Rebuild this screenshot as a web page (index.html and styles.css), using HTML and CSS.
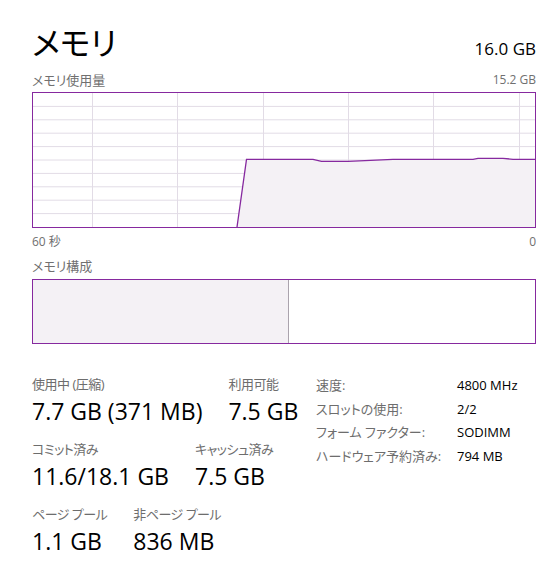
FILE: index.html
```html
<!DOCTYPE html>
<html lang="ja">

<head>
  <meta charset="UTF-8" />
  <title>メモリ</title>
  <link rel="stylesheet" href="styles.css">
</head>

<body>
  <div class="page">
    <div class="head">
      <h1>メモリ</h1>
      <span class="total">16.0 GB</span>
    </div>

    <div class="caption first">
      <span>メモリ使用量</span>
      <span class="num">15.2 GB</span>
    </div>
    <div class="graph">
      <svg viewBox="0 0 502 134" preserveAspectRatio="none">
        <g class="grid">
          <line x1="0" y1="13.4" x2="502" y2="13.4" />
          <line x1="0" y1="26.8" x2="502" y2="26.8" />
          <line x1="0" y1="40.2" x2="502" y2="40.2" />
          <line x1="0" y1="53.6" x2="502" y2="53.6" />
          <line x1="0" y1="67" x2="502" y2="67" />
          <line x1="0" y1="80.4" x2="502" y2="80.4" />
          <line x1="0" y1="93.8" x2="502" y2="93.8" />
          <line x1="0" y1="107.2" x2="502" y2="107.2" />
          <line x1="0" y1="120.6" x2="502" y2="120.6" />
          <line x1="59.5" y1="0" x2="59.5" y2="134" />
          <line x1="144.5" y1="0" x2="144.5" y2="134" />
          <line x1="230.5" y1="0" x2="230.5" y2="134" />
          <line x1="315.5" y1="0" x2="315.5" y2="134" />
          <line x1="400.5" y1="0" x2="400.5" y2="134" />
          <line x1="486.5" y1="0" x2="486.5" y2="134" />
        </g>
        <polygon class="area" points="204,134 213.5,66.3 280,66.3 288.5,68.3 315,68.3 360,66.3 440,66.3 445,65.3 470,65.3 480,66.3 502,66.3 502,134" />
        <polyline class="line" points="204,134 213.5,66.3 280,66.3 288.5,68.3 315,68.3 360,66.3 440,66.3 445,65.3 470,65.3 480,66.3 502,66.3" />
      </svg>
    </div>
    <div class="caption axis">
      <span class="num">60 秒</span>
      <span class="num">0</span>
    </div>

    <div class="caption">
      <span>メモリ構成</span>
    </div>
    <div class="compose">
      <div class="in-use"></div>
      <div class="free"></div>
    </div>

    <div class="stats">
      <div class="left">
        <div class="row">
          <div class="stat">
            <div class="label">使用中 (圧縮)</div>
            <div class="value">7.7 GB (371 MB)</div>
          </div>
          <div class="stat">
            <div class="label">利用可能</div>
            <div class="value">7.5 GB</div>
          </div>
        </div>
        <div class="row">
          <div class="stat">
            <div class="label">コミット済み</div>
            <div class="value">11.6/18.1 GB</div>
          </div>
          <div class="stat">
            <div class="label">キャッシュ済み</div>
            <div class="value">7.5 GB</div>
          </div>
        </div>
        <div class="row">
          <div class="stat">
            <div class="label">ページ プール</div>
            <div class="value">1.1 GB</div>
          </div>
          <div class="stat">
            <div class="label">非ページ プール</div>
            <div class="value">836 MB</div>
          </div>
        </div>
      </div>

      <dl class="specs">
        <dt>速度:</dt>
        <dd>4800 MHz</dd>
        <dt>スロットの使用:</dt>
        <dd>2/2</dd>
        <dt>フォーム ファクター:</dt>
        <dd>SODIMM</dd>
        <dt>ハードウェア予約済み:</dt>
        <dd>794 MB</dd>
      </dl>
    </div>
  </div>
</body>

</html>
```

FILE: styles.css
```css
* {
  box-sizing: border-box;
  margin: 0;
  padding: 0;
}

body {
  font-family: 'Open Sans', 'Noto Sans CJK JP', sans-serif;
  font-feature-settings: "palt";
  background: #fff;
  color: #000;
}

.page {
  padding: 22px 13px 0 32px;
}

.head {
  display: flex;
  justify-content: space-between;
  align-items: baseline;
}

.head h1 {
  font-size: 32px;
  font-weight: 400;
  line-height: 42px;
}

.total {
  font-size: 17px;
}

.caption {
  display: flex;
  justify-content: space-between;
  font-size: 13px;
  line-height: 18px;
  color: #707070;
  margin-top: 6px;
}

.caption.first {
  margin-top: 7px;
}

.caption.axis {
  margin-top: 5px;
}

.caption .num {
  font-size: 12px;
}

.graph {
  border: 1px solid #86299f;
  height: 136px;
  margin-top: 3px;
}

.graph svg {
  display: block;
  width: 100%;
  height: 100%;
}

.grid line {
  stroke: #e2dce6;
  stroke-width: 1;
}

.area {
  fill: #f4f1f5;
}

.line {
  fill: none;
  stroke: #86299f;
  stroke-width: 1.3;
}

.compose {
  display: flex;
  border: 1px solid #86299f;
  height: 65px;
  margin-top: 4px;
}

.compose .in-use {
  width: 256px;
  background: #f4f1f5;
  border-right: 1px solid #aaa3ad;
}

.compose .free {
  flex: 1;
}

.stats {
  display: flex;
  margin-top: 30px;
}

.left {
  width: 284px;
  display: flex;
  flex-direction: column;
  gap: 11px;
}

.row {
  display: flex;
  gap: 26px;
}

.label {
  font-size: 13px;
  line-height: 20px;
  letter-spacing: -0.5px;
  color: #6d6d6d;
}

.value {
  font-size: 23px;
  line-height: 34px;
}

.specs {
  display: grid;
  grid-template-columns: 141px auto;
  font-size: 13px;
  line-height: 23.5px;
  align-content: start;
}

.specs dt {
  color: #6d6d6d;
}
```
